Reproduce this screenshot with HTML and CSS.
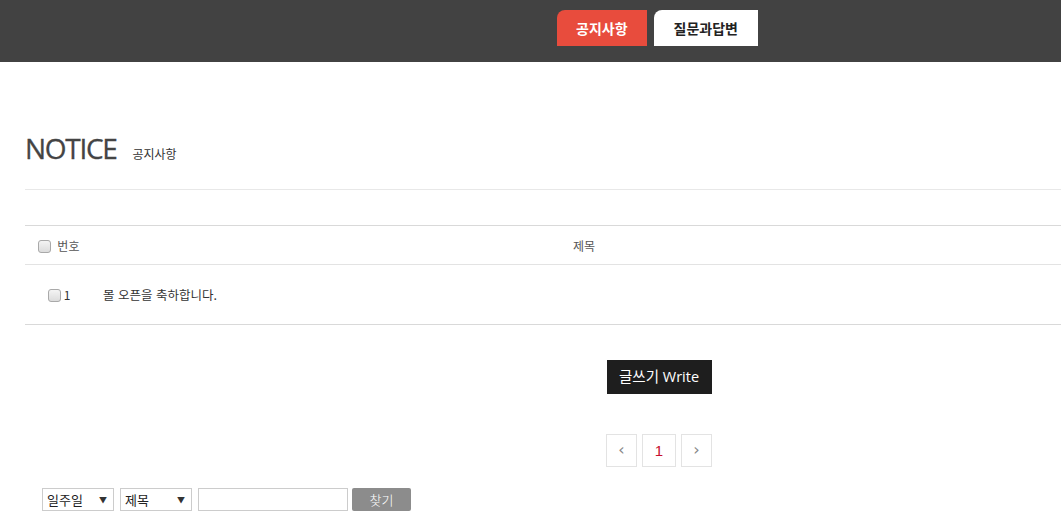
FILE: index.html
```html
<!DOCTYPE html>
<html lang="ko">
<head>
<meta charset="UTF-8" />
<title>NOTICE</title>
<link rel="stylesheet" href="styles.css">
</head>
<body>
<header class="topbar">
  <nav class="tabs">
    <a class="tab tab-active" href="#">공지사항</a>
    <a class="tab" href="#">질문과답변</a>
  </nav>
</header>
<div class="wrap">
<main class="board">
  <div class="board-title">
    <h1>NOTICE</h1>
    <span class="subtitle">공지사항</span>
  </div>
  <table class="board-list">
    <colgroup>
      <col class="col-no">
      <col class="col-subject">
      <col>
    </colgroup>
    <thead>
      <tr>
        <th class="th-no"><input type="checkbox" class="chk"> 번호</th>
        <th class="th-subject">제목</th>
        <th></th>
      </tr>
    </thead>
    <tbody>
      <tr>
        <td class="td-no"><input type="checkbox" class="chk">1</td>
        <td class="td-subject">몰 오픈을 축하합니다.</td>
        <td></td>
      </tr>
    </tbody>
  </table>
  <div class="board-actions">
    <a class="btn-write" href="#">글쓰기 Write</a>
  </div>
  <div class="paging">
    <a class="page" href="#">&lsaquo;</a>
    <a class="page page-current" href="#">1</a>
    <a class="page" href="#">&rsaquo;</a>
  </div>
  <form class="search">
    <div class="select">일주일<span class="arrow">▼</span></div>
    <div class="select">제목<span class="arrow">▼</span></div>
    <input type="text" class="keyword">
    <button type="button" class="btn-search">찾기</button>
  </form>
</main>
</div>
</body>
</html>
```

FILE: styles.css
```css
* {
  box-sizing: border-box;
  margin: 0;
  padding: 0;
}
body {
  background: #fff;
  color: #333;
  font-family: "Open Sans", "Noto Sans CJK KR", sans-serif;
}
a {
  text-decoration: none;
}
.wrap {
  width: 100%;
  overflow: hidden;
}

/* top bar */
.topbar {
  background: #424242;
  height: 62px;
  padding: 10px 0 0 557px;
}
.tabs {
  display: flex;
  gap: 7px;
}
.tab {
  display: block;
  height: 36px;
  line-height: 36px;
  padding: 0 20px;
  background: #fff;
  color: #222;
  font-family: "Noto Sans CJK KR", sans-serif;
  font-size: 14px;
  font-weight: 700;
  border-top-left-radius: 8px;
}
.tab-active {
  padding: 0 19px;
  background: #e84c3d;
  color: #fff;
}

/* board */
.board {
  width: 1268px;
  margin-left: 25px;
  padding-bottom: 20px;
}
.board-title {
  display: flex;
  align-items: baseline;
  padding: 66px 0 21px;
  border-bottom: 1px solid #e8e8e8;
}
.board-title h1 {
  font-family: "Open Sans", sans-serif;
  font-size: 28px;
  font-weight: 400;
  color: #444;
  letter-spacing: -1.3px;
  line-height: 40px;
  -webkit-text-stroke: 0.3px #444;
}
.subtitle {
  margin-left: 16px;
  font-family: "Noto Sans CJK KR", sans-serif;
  font-size: 12px;
  color: #333;
}

.board-list {
  width: 100%;
  margin-top: 35px;
  border-collapse: collapse;
  border-top: 1px solid #d9d9d9;
  border-bottom: 1px solid #d9d9d9;
  font-family: "Noto Sans CJK KR", sans-serif;
  font-size: 12px;
}
.col-no {
  width: 68px;
}
.col-subject {
  width: 982px;
}
.board-list th {
  height: 39px;
  font-weight: 400;
  color: #555;
  border-bottom: 1px solid #e3e3e3;
}
.th-no {
  text-align: left;
  padding-left: 13px;
}
.th-subject {
  text-align: center;
}
.board-list td {
  height: 60px;
  color: #333;
}
.td-no {
  text-align: center;
}
.td-subject {
  padding-left: 10px;
  font-size: 12.5px;
}
.chk {
  appearance: none;
  -webkit-appearance: none;
  width: 13px;
  height: 13px;
  margin: 0 3px -2px 0;
  border: 1px solid #a9a9a9;
  border-radius: 3px;
  background: linear-gradient(#f4f4f4, #dcdcdc);
}

.board-actions {
  display: flex;
  justify-content: center;
  margin-top: 35px;
}
.btn-write {
  display: block;
  width: 105px;
  height: 34px;
  line-height: 34px;
  text-align: center;
  background: #1e1e1e;
  color: #fff;
  font-family: "Open Sans", "Noto Sans CJK KR", sans-serif;
  font-size: 14.5px;
}

.paging {
  display: flex;
  justify-content: center;
  gap: 5px;
  margin-top: 40px;
}
.page {
  display: block;
  min-width: 31px;
  height: 33px;
  line-height: 30px;
  padding: 0 3px;
  text-align: center;
  border: 1px solid #e3e3e3;
  color: #888;
  font-family: "DejaVu Sans", sans-serif;
  font-size: 16px;
}
.page-current {
  min-width: 34px;
  line-height: 31px;
  color: #c8102e;
  font-family: "Liberation Sans", sans-serif;
  font-size: 15px;
}

.search {
  display: flex;
  gap: 6px;
  margin: 21px 0 0 17px;
  font-family: "Noto Sans CJK KR", sans-serif;
  font-size: 13px;
}
.select {
  display: flex;
  justify-content: space-between;
  align-items: center;
  width: 72px;
  height: 23px;
  padding: 0 6px 0 4px;
  border: 1px solid #ccc;
  color: #222;
}
.arrow {
  font-size: 8px;
  color: #333;
}
.keyword {
  width: 150px;
  height: 23px;
  border: 1px solid #ccc;
}
.btn-search {
  width: 59px;
  height: 23px;
  margin-left: -2px;
  border: none;
  border-radius: 2px;
  background: #8c8c8c;
  color: #fff;
  font-family: "Noto Sans CJK KR", sans-serif;
  font-size: 13px;
  font-weight: 300;
}
```
